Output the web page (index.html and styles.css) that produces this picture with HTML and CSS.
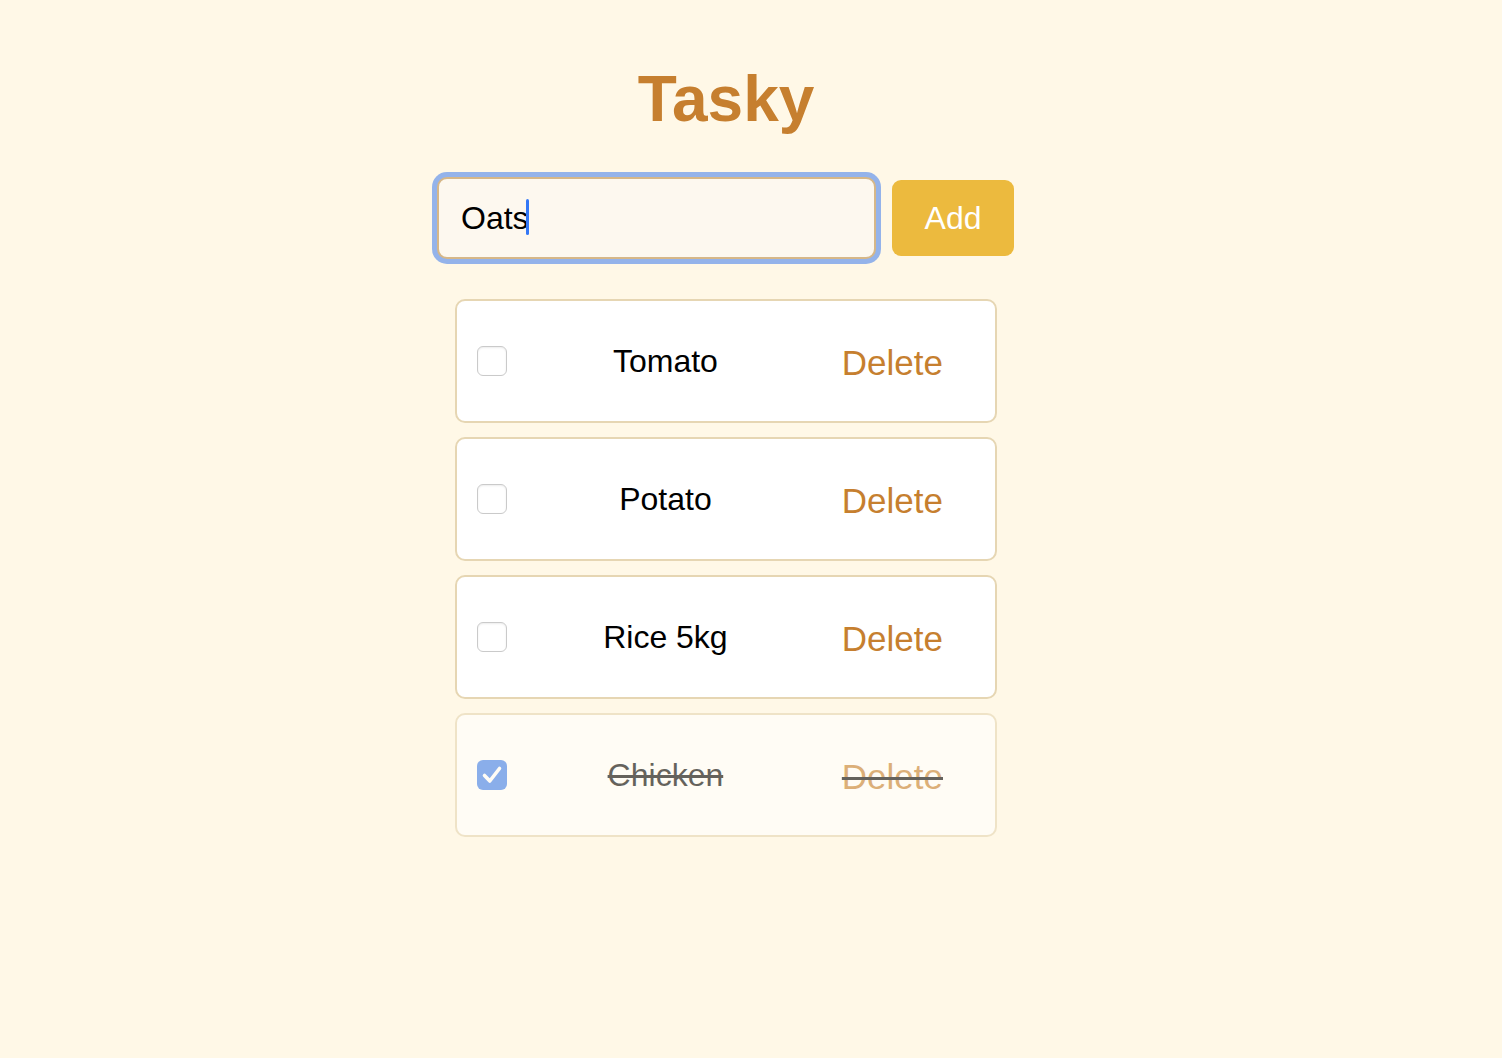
FILE: index.html
```html
<!DOCTYPE html>
<html lang="en">
<head>
<meta charset="utf-8">
<title>Tasky</title>
<link rel="stylesheet" href="styles.css">
</head>
<body>
<main class="app">
  <h1 class="title">Tasky</h1>
  <form class="add-row" onsubmit="return false">
    <div class="field">
      <input class="task-input" type="text" value="Oats" aria-label="New task">
      <span class="caret"></span>
    </div>
    <button class="add-btn" type="submit">Add</button>
  </form>
  <ul class="tasks">
    <li class="task">
      <span class="check"></span>
      <span class="task-name">Tomato</span>
      <button class="delete-btn" type="button">Delete</button>
    </li>
    <li class="task">
      <span class="check"></span>
      <span class="task-name">Potato</span>
      <button class="delete-btn" type="button">Delete</button>
    </li>
    <li class="task">
      <span class="check"></span>
      <span class="task-name">Rice 5kg</span>
      <button class="delete-btn" type="button">Delete</button>
    </li>
    <li class="task done">
      <span class="check checked"><svg viewBox="0 0 30 30" width="30" height="30"><path d="M7.5 15.5 L12.8 21 L22.5 8.5" fill="none" stroke="#fff" stroke-width="3.6" stroke-linecap="round" stroke-linejoin="round"/></svg></span>
      <span class="task-name">Chicken</span>
      <button class="delete-btn" type="button">Delete</button>
    </li>
  </ul>
</main>
</body>
</html>
```

FILE: styles.css
```css
* { box-sizing: border-box; }

html, body {
  margin: 0;
  padding: 0;
  background: #FFF8E7;
}

body {
  font-family: "Liberation Sans", Arial, Helvetica, sans-serif;
  color: #000;
  min-height: 1058px;
  display: flex;
  justify-content: center;
  padding-right: 50px;
}

.app {
  display: flex;
  flex-direction: column;
  align-items: center;
  padding-top: 62px;
}

.title {
  margin: 0;
  font-size: 64px;
  font-weight: 700;
  color: #C67F2F;
  line-height: 74px;
}

.add-row {
  display: flex;
  align-items: center;
  gap: 16px;
  margin-top: 41px;
  margin-left: -1px;
}

.field {
  position: relative;
}

.task-input {
  display: block;
  width: 439px;
  height: 82px;
  padding: 0 22px;
  font-family: inherit;
  font-size: 32px;
  color: #000;
  background: #FDF8EF;
  border: 2px solid #D6B788;
  border-radius: 10px;
  box-shadow: 0 0 0 5px #94B3EA;
  outline: none;
}

.caret {
  position: absolute;
  left: 89px;
  top: 22px;
  width: 3px;
  height: 36px;
  border-radius: 1.5px;
  background: #3478F6;
}

.add-btn {
  width: 122px;
  height: 76px;
  border: none;
  border-radius: 9px;
  background: #ECBA3E;
  color: #fff;
  font-family: inherit;
  font-size: 32px;
  padding: 0;
}

.tasks {
  list-style: none;
  margin: 40px 0 0 0;
  padding: 0;
  display: flex;
  flex-direction: column;
  gap: 14px;
}

.task {
  width: 542px;
  height: 124px;
  display: flex;
  align-items: center;
  padding: 0 38px 0 20px;
  background: #fff;
  border: 2px solid #E6D6B3;
  border-radius: 10px;
}

.check {
  flex: none;
  width: 30px;
  height: 30px;
  border: 1.5px solid #CACACA;
  border-radius: 6px;
  background: #fff;
  box-shadow: inset 0 1px 2px rgba(0,0,0,0.08);
  display: flex;
}

.check.checked {
  border: none;
  background: #3D7EED;
  box-shadow: none;
}

.task-name {
  flex: 1;
  text-align: center;
  font-size: 32px;
}

.delete-btn {
  flex: none;
  border: none;
  background: transparent;
  color: #C67F2F;
  font-family: inherit;
  font-size: 35px;
  padding: 3px 14px 0 18px;
}

.task.done {
  opacity: 0.6;
}

.task.done .task-name,
.task.done .delete-btn {
  text-decoration: line-through;
  text-decoration-color: #000;
  text-decoration-thickness: 3px;
}
```
